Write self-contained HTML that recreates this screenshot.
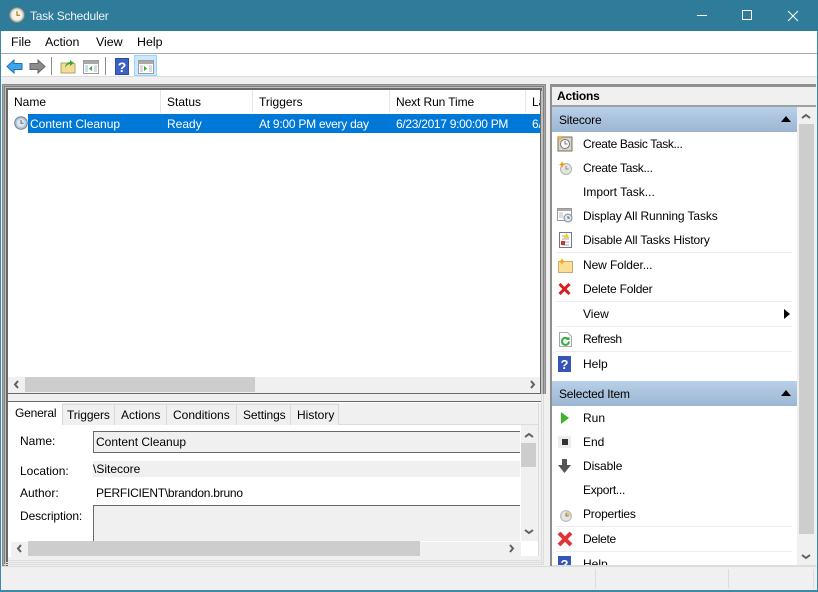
<!DOCTYPE html>
<html><head><meta charset="utf-8"><title>Task Scheduler</title>
<style>
html,body{margin:0;padding:0;background:#f0f0f0}
#w{position:relative;width:818px;height:592px;overflow:hidden;background:#f0f0f0;font-family:"Liberation Sans",sans-serif;font-size:12px;color:#000}
#w div,#w span.t,#w svg{position:absolute}
.t{white-space:nowrap;line-height:16px}
.w{color:#fff}
.sep{background:#ececec;height:1px;left:556px;width:236px}
.h{background:#e5e5e5;width:1px}
.tab{background:#f0f0f0;border:1px solid #d9d9d9;border-bottom:none;box-sizing:border-box;height:21px;top:404px}
.g{background:#cdcdcd}
.ln{background:#696969}
.grp{background:linear-gradient(#b8d0e8,#9cb5d2);left:552px;width:245px;height:25px}
</style></head><body>
<div id="w">
<!-- title -->
<div style="left:0;top:0;width:818px;height:31px;background:#2e7b9a"></div>
<svg style="left:9px;top:7px" width="16" height="16" viewBox="0 0 16 16"><circle cx="8" cy="8" r="7.2" fill="#d9d6c6" stroke="#8d8d86"/><circle cx="8" cy="8" r="5.2" fill="#f6f4e8"/><path d="M8 4v4.300h3" fill="none" stroke="#a67c2a" stroke-width="1.2"/></svg>
<span class="t w" style="left:30px;top:8px;letter-spacing:-.25px;color:#eaf3f6">Task Scheduler</span>
<div style="left:697px;top:15px;width:10px;height:1px;background:#fff"></div>
<div style="left:742px;top:10px;width:8px;height:8px;border:1px solid #fff"></div>
<svg style="left:787px;top:10px" width="12" height="12" viewBox="0 0 12 12"><path d="M1 1l10 10M11 1L1 11" stroke="#fff" fill="none"/></svg>
<!-- outer border -->
<div style="left:0;top:31px;width:1px;height:561px;background:#3d89a8"></div>
<div style="left:817px;top:31px;width:1px;height:561px;background:#3d89a8"></div>
<div style="left:0;top:590px;width:818px;height:2px;background:#3d89a8"></div>
<!-- menu -->
<div style="left:1px;top:31px;width:816px;height:22px;background:#fff"></div>
<div style="left:1px;top:53px;width:816px;height:1px;background:#a9a9b2"></div>
<span class="t" style="left:11px;top:34px;font-size:12.4px">File</span>
<span class="t" style="left:45px;top:34px;font-size:12.4px">Action</span>
<span class="t" style="left:96px;top:34px;font-size:12.4px">View</span>
<span class="t" style="left:137px;top:34px;font-size:12.4px">Help</span>
<!-- toolbar -->
<div style="left:1px;top:54px;width:816px;height:22px;background:#fff"></div>
<div style="left:1px;top:76px;width:816px;height:1px;background:#dcdcdc"></div>
<svg style="left:6px;top:59px" width="17" height="15" viewBox="0 0 17 15"><path d="M1 7.500L8 1v3.500h8v6H8V14z" fill="#3fa6ec" stroke="#1f6fb5"/></svg>
<svg style="left:29px;top:59px" width="17" height="15" viewBox="0 0 17 15"><path d="M16 7.500L9 1v3.500H1v6h8V14z" fill="#8c8c8c" stroke="#666"/></svg>
<div style="left:51px;top:57px;width:1px;height:18px;background:#8c8c8c"></div>
<svg style="left:60px;top:58px" width="16" height="16" viewBox="0 0 16 16"><path d="M1 5h13l1 1v9H1z" fill="#f3dc94" stroke="#b9a168"/><path d="M5 10C5 6 8 4 10 4V2l4 3-4 3V6C8 6 6 8 5 10z" fill="#3fa535"/></svg>
<svg style="left:83px;top:60px" width="16" height="14" viewBox="0 0 16 14"><rect x=".5" y=".5" width="15" height="13" fill="#fff" stroke="#9c9c9c"/><rect x="1" y="1" width="14" height="3" fill="#a9a9a9"/><rect x="2" y="5" width="3" height="7" fill="#d5dbe2"/><rect x="11" y="5" width="3" height="7" fill="#d5dbe2"/><path d="M9 6v5L6 8.500z" fill="#2faa35"/></svg>
<div style="left:105px;top:57px;width:1px;height:18px;background:#8c8c8c"></div>
<svg style="left:115px;top:58px" width="14" height="17" viewBox="0 0 14 17"><rect width="14" height="17" fill="#2f4ba8"/><rect x="1" y="1" width="12" height="15" fill="#3e5fc4"/><text x="7" y="14" font-family="Liberation Sans" font-weight="bold" font-size="14" fill="#fff" text-anchor="middle">?</text></svg>
<div style="left:134px;top:55px;width:23px;height:21px;box-sizing:border-box;background:#cce8ff;border:1px solid #99d1ff"></div>
<svg style="left:138px;top:60px" width="16" height="14" viewBox="0 0 16 14"><rect x=".5" y=".5" width="15" height="13" fill="#fff" stroke="#9c9c9c"/><rect x="1" y="1" width="14" height="3" fill="#a9a9a9"/><rect x="2" y="5" width="3" height="7" fill="#d5dbe2"/><rect x="11" y="5" width="3" height="7" fill="#d5dbe2"/><path d="M6 6v5l3-2.500z" fill="#2faa35"/></svg>

<!-- left top pane frame -->
<div style="left:2px;top:84px;width:544px;height:482px;background:#8a8a8a"></div>
<div style="left:3px;top:85px;width:542px;height:480px;background:#a8a8a8"></div>
<div style="left:4px;top:86px;width:540px;height:480px;background:#7f7f7f"></div>
<div style="left:5px;top:87px;width:538px;height:479px;background:#c0c0c0"></div>
<div style="left:6px;top:88px;width:536px;height:3px;background:#696969"></div>
<div style="left:6px;top:88px;width:2px;height:478px;background:#696969"></div>
<div style="left:540px;top:88px;width:1px;height:306px;background:#696969"></div>
<div style="left:8px;top:90px;width:532px;height:303px;background:#fff"></div>
<!-- list header -->
<div class="h" style="left:160px;top:90px;height:23px"></div>
<div class="h" style="left:252px;top:90px;height:23px"></div>
<div class="h" style="left:389px;top:90px;height:23px"></div>
<div class="h" style="left:525px;top:90px;height:23px"></div>
<span class="t" style="left:14px;top:94px">Name</span>
<span class="t" style="left:167px;top:94px">Status</span>
<span class="t" style="left:259px;top:94px">Triggers</span>
<span class="t" style="left:396px;top:94px;letter-spacing:-.1px">Next Run Time</span>
<span class="t" style="left:532px;top:94px;width:8px;overflow:hidden">La</span>
<!-- row -->
<svg style="left:14px;top:116px" width="14" height="14" viewBox="0 0 14 14"><circle cx="7" cy="7" r="6.300" fill="#b4c6d8" stroke="#6c8098"/><circle cx="7" cy="7" r="4" fill="#dfe7ee"/><path d="M7 4v3.300h2.500" fill="none" stroke="#5a6a7c"/></svg>
<div style="left:28px;top:114px;width:512px;height:19px;background:#0078d7"></div>
<span class="t w" style="left:30px;top:116px">Content Cleanup</span>
<span class="t w" style="left:167px;top:116px">Ready</span>
<span class="t w" style="left:259px;top:116px;letter-spacing:-.25px">At 9:00 PM every day</span>
<span class="t w" style="left:396px;top:116px;letter-spacing:-.3px">6/23/2017 9:00:00 PM</span>
<span class="t w" style="left:532px;top:116px;width:8px;overflow:hidden">6/</span>
<!-- list hscroll -->
<div style="left:8px;top:377px;width:532px;height:16px;background:#f0f0f0"></div>
<div class="g" style="left:25px;top:377px;width:230px;height:15px"></div>
<svg style="left:13px;top:380px" width="7" height="9" viewBox="0 0 7 9"><path d="M5 1L2 4.500 5 8" fill="none" stroke="#606060" stroke-width="2"/></svg>
<svg style="left:529px;top:380px" width="7" height="9" viewBox="0 0 7 9"><path d="M2 1l3 3.500L2 8" fill="none" stroke="#606060" stroke-width="2"/></svg>
<div class="ln" style="left:6px;top:393px;width:535px;height:1px"></div>
<!-- lower pane -->
<div style="left:8px;top:394px;width:541px;height:172px;background:#f0f0f0"></div>
<div class="ln" style="left:6px;top:401px;width:536px;height:1px"></div>
<div style="left:8px;top:402px;width:533px;height:1px;background:#fff"></div>
<div style="left:538px;top:403px;width:1px;height:157px;background:#dcdcdc"></div>
<div style="left:8px;top:424px;width:531px;height:1px;background:#dcdcdc"></div>
<div class="tab" style="left:62px;width:53px"></div>
<div class="tab" style="left:114px;width:53px"></div>
<div class="tab" style="left:166px;width:71px"></div>
<div class="tab" style="left:236px;width:55px"></div>
<div class="tab" style="left:290px;width:49px"></div>
<div style="left:8px;top:403px;width:54px;height:22px;background:#fff"></div>
<span class="t" style="left:15px;top:405px;letter-spacing:-.2px">General</span>
<span class="t" style="left:67px;top:407px;letter-spacing:-.1px">Triggers</span>
<span class="t" style="left:121px;top:407px">Actions</span>
<span class="t" style="left:173px;top:407px">Conditions</span>
<span class="t" style="left:243px;top:407px;letter-spacing:-.1px">Settings</span>
<span class="t" style="left:297px;top:407px">History</span>
<div style="left:8px;top:425px;width:530px;height:135px;background:#fff"></div>
<div style="left:521px;top:425px;width:17px;height:116px;background:#f0f0f0"></div>
<div class="g" style="left:521px;top:443px;width:15px;height:24px"></div>
<svg style="left:524px;top:432px" width="10" height="7" viewBox="0 0 10 7"><path d="M1 5l4-3 4 3" fill="none" stroke="#606060" stroke-width="2"/></svg>
<svg style="left:524px;top:528px" width="10" height="7" viewBox="0 0 10 7"><path d="M1 2l4 3 4-3" fill="none" stroke="#606060" stroke-width="2"/></svg>
<span class="t" style="left:20px;top:433px">Name:</span>
<div style="left:93px;top:431px;width:427px;height:22px;background:#f0f0f0;border-top:1px solid #696969;border-bottom:1px solid #696969;border-left:1px solid #696969;box-sizing:border-box"></div>
<span class="t" style="left:96px;top:434px">Content Cleanup</span>
<span class="t" style="left:20px;top:463px">Location:</span>
<div style="left:93px;top:461px;width:427px;height:16px;background:#f0f0f0"></div>
<span class="t" style="left:93px;top:461px">\Sitecore</span>
<span class="t" style="left:20px;top:485px">Author:</span>
<span class="t" style="left:96px;top:485px;letter-spacing:-.25px">PERFICIENT\brandon.bruno</span>
<span class="t" style="left:20px;top:508px;letter-spacing:-.1px">Description:</span>
<div style="left:93px;top:505px;width:427px;height:36px;background:#f0f0f0;border-top:1px solid #696969;border-left:1px solid #696969;box-sizing:border-box"></div>
<!-- lower hscroll -->
<div style="left:11px;top:541px;width:510px;height:15px;background:#f0f0f0"></div>
<div style="left:8px;top:541px;width:513px;height:1px;background:#fff"></div>
<div style="left:8px;top:556px;width:531px;height:5px;background:#f0f0f0"></div>
<div style="left:8px;top:541px;width:3px;height:16px;background:#fff"></div>
<div class="g" style="left:28px;top:541px;width:392px;height:15px"></div>
<svg style="left:16px;top:544px" width="7" height="9" viewBox="0 0 7 9"><path d="M5 1L2 4.500 5 8" fill="none" stroke="#606060" stroke-width="2"/></svg>
<svg style="left:508px;top:544px" width="7" height="9" viewBox="0 0 7 9"><path d="M2 1l3 3.500L2 8" fill="none" stroke="#606060" stroke-width="2"/></svg>
<div style="left:8px;top:560px;width:532px;height:1px;background:#dcdcdc"></div>
<div style="left:6px;top:562px;width:538px;height:1px;background:#dcdcdc"></div>
<div style="left:4px;top:564px;width:540px;height:1px;background:#dcdcdc"></div>
<div style="left:541px;top:394px;width:1px;height:170px;background:#dcdcdc"></div>
<div style="left:543px;top:394px;width:1px;height:170px;background:#dcdcdc"></div>

<!-- right pane -->
<div style="left:550px;top:84px;width:267px;height:482px;background:#f0f0f0"></div>
<div style="left:550px;top:84px;width:266px;height:3px;background:#8f8f8f"></div>
<div style="left:550px;top:84px;width:2px;height:482px;background:#8f8f8f"></div>
<div style="left:552px;top:87px;width:264px;height:18px;background:#f0f0f0"></div>
<span class="t" style="left:557px;top:88px;font-weight:bold;letter-spacing:-.2px">Actions</span>
<div style="left:552px;top:105px;width:264px;height:2px;background:#a0a0a0"></div>
<div style="left:552px;top:107px;width:245px;height:458px;background:#fff"></div>
<div style="left:797px;top:107px;width:17px;height:458px;background:#f0f0f0"></div>
<div class="g" style="left:799px;top:124px;width:15px;height:410px"></div>
<svg style="left:801px;top:113px" width="10" height="7" viewBox="0 0 10 7"><path d="M1 5l4-3 4 3" fill="none" stroke="#606060" stroke-width="2"/></svg>
<svg style="left:801px;top:553px" width="10" height="7" viewBox="0 0 10 7"><path d="M1 2l4 3 4-3" fill="none" stroke="#606060" stroke-width="2"/></svg>

<div class="grp" style="top:107px"></div>
<span class="t" style="left:559px;top:112px;letter-spacing:-.2px">Sitecore</span>
<svg style="left:781px;top:116px" width="10" height="6"><path d="M5 0l5 6H0z" fill="#000"/></svg>

<svg style="left:557px;top:135px" width="16" height="17" viewBox="0 0 16 17"><rect x="1" y="2" width="14" height="14" fill="#d8d4c4" stroke="#7a6f60"/><circle cx="8" cy="9" r="4.500" fill="#fff" stroke="#777"/><path d="M8 6v3h2.500" fill="none" stroke="#777"/><path d="M3 0l1 2 2 1-2 1-1 2-1-2-2-1 2-1z" fill="#f5b428"/></svg>
<span class="t" style="left:583px;top:136px;letter-spacing:-.35px">Create Basic Task...</span>
<svg style="left:559px;top:161px" width="13" height="14" viewBox="0 0 13 14"><circle cx="7" cy="8" r="5.500" fill="#e8e4d8" stroke="#a8b8c4"/><path d="M7 5v3h2.500" fill="none" stroke="#80909c"/><path d="M3 0l1 2.500 2.500 1-2.500 1L3 7 2 4.500l-2-1 2-1z" fill="#f19a14"/></svg>
<span class="t" style="left:583px;top:160px;letter-spacing:-.3px">Create Task...</span>
<span class="t" style="left:583px;top:184px">Import Task...</span>
<svg style="left:557px;top:208px" width="16" height="15" viewBox="0 0 16 15"><rect x=".5" y=".5" width="14" height="12" fill="#fff" stroke="#999"/><rect x="1" y="1" width="13" height="2" fill="#aaa"/><path d="M2 5h4M2 7h4M2 9h4" stroke="#bbb"/><circle cx="11" cy="10" r="4" fill="#dfe6ec" stroke="#7f8f9f"/><path d="M11 8v2h2" fill="none" stroke="#667"/></svg>
<span class="t" style="left:583px;top:208px;letter-spacing:-.1px">Display All Running Tasks</span>
<svg style="left:558px;top:232px" width="14" height="16" viewBox="0 0 14 16"><rect x="1.500" y=".5" width="12" height="15" fill="#fff" stroke="#6b7a90"/><path d="M4 4h3M4 7h7M4 10h7M4 13h7" stroke="#aab"/><path d="M8.500 1l3 5h-6z" fill="#f5d020"/><rect x="3" y="9" width="4" height="4" fill="#c33"/></svg>
<span class="t" style="left:583px;top:232px;letter-spacing:-.15px">Disable All Tasks History</span>
<div class="sep" style="top:252px"></div>
<svg style="left:558px;top:258px" width="15" height="15" viewBox="0 0 15 15"><path d="M.5 3.500h14v11H.5z" fill="#f8df95" stroke="#c7ad6c"/><path d="M4 0l1 2.500 2.500 1-2.500 1L4 7 3 4.500l-2.500-1 2.500-1z" fill="#f5a413"/></svg>
<span class="t" style="left:583px;top:257px;letter-spacing:-.1px">New Folder...</span>
<svg style="left:558px;top:283px" width="13" height="12" viewBox="0 0 13 12"><path d="M1.500 1l10 10M11.500 1l-10 10" stroke="#d81e20" stroke-width="3"/></svg>
<span class="t" style="left:583px;top:281px;letter-spacing:-.2px">Delete Folder</span>
<div class="sep" style="top:301px"></div>
<span class="t" style="left:583px;top:306px">View</span>
<svg style="left:784px;top:309px" width="6" height="10"><path d="M0 0l6 5-6 5z" fill="#000"/></svg>
<div class="sep" style="top:326px"></div>
<svg style="left:559px;top:332px" width="13" height="15" viewBox="0 0 13 15"><path d="M.5.500h8l4 4v10H.5z" fill="#fff" stroke="#aaa"/><path d="M10 9.500a3.500 3.500 0 1 1-1-2.600" fill="none" stroke="#2fae3a" stroke-width="2"/><path d="M10.500 4.500v3.500H7z" fill="#2fae3a"/></svg>
<span class="t" style="left:583px;top:331px;letter-spacing:-.5px">Refresh</span>
<div class="sep" style="top:351px"></div>
<svg style="left:558px;top:356px" width="13" height="16" viewBox="0 0 13 16"><rect width="13" height="16" fill="#3655b8"/><text x="6.500" y="13" font-family="Liberation Sans" font-weight="bold" font-size="13" fill="#fff" text-anchor="middle">?</text></svg>
<span class="t" style="left:583px;top:356px">Help</span>

<div class="grp" style="top:381px"></div>
<span class="t" style="left:559px;top:386px;letter-spacing:-.2px">Selected Item</span>
<svg style="left:781px;top:390px" width="10" height="6"><path d="M5 0l5 6H0z" fill="#000"/></svg>

<svg style="left:561px;top:412px" width="8" height="12"><path d="M0 0l8 6-8 6z" fill="#3cb52d"/></svg>
<span class="t" style="left:583px;top:410px">Run</span>
<div style="left:558px;top:436px;width:13px;height:12px;background:#ededed"></div>
<div style="left:562px;top:439px;width:6px;height:6px;background:#333"></div>
<span class="t" style="left:583px;top:434px">End</span>
<svg style="left:558px;top:459px" width="13" height="14" viewBox="0 0 13 14"><path d="M4 0h5v6h4l-6.500 8L0 6h4z" fill="#555"/></svg>
<span class="t" style="left:583px;top:458px;letter-spacing:-.1px">Disable</span>
<span class="t" style="left:583px;top:482px;letter-spacing:-.3px">Export...</span>
<svg style="left:560px;top:510px" width="12" height="12" viewBox="0 0 12 12"><circle cx="6" cy="6" r="5.400" fill="#e8e6dc" stroke="#aab6c0"/><path d="M6 1.500V6h4.500A4.500 4.500 0 0 0 6 1.500z" fill="#e8c878"/><path d="M6 3v3h2.500" fill="none" stroke="#778"/></svg>
<span class="t" style="left:583px;top:506px;letter-spacing:-.2px">Properties</span>
<div class="sep" style="top:526px"></div>
<svg style="left:557px;top:531px" width="16" height="16" viewBox="0 0 16 16"><path d="M2 2l12 12M14 2L2 14" stroke="#e0343a" stroke-width="4"/></svg>
<span class="t" style="left:583px;top:531px;letter-spacing:-.3px">Delete</span>
<div class="sep" style="top:551px"></div>
<div style="left:552px;top:556px;width:245px;height:9px;overflow:hidden">
<span class="t" style="left:31px;top:0">Help</span>
<svg style="left:6px;top:0" width="13" height="16" viewBox="0 0 13 16"><rect width="13" height="16" fill="#3655b8"/><text x="6.500" y="13" font-family="Liberation Sans" font-weight="bold" font-size="13" fill="#fff" text-anchor="middle">?</text></svg>
</div>
<div style="left:552px;top:565px;width:264px;height:1px;background:#dcdcdc"></div>

<!-- status bar -->
<div style="left:1px;top:566px;width:816px;height:1px;background:#dcdcdc"></div>
<div style="left:1px;top:567px;width:816px;height:23px;background:#f0f0f0"></div>
<div style="left:595px;top:569px;width:1px;height:19px;background:#dcdcdc"></div>
<div style="left:728px;top:569px;width:1px;height:19px;background:#dcdcdc"></div>
<div style="left:813px;top:569px;width:1px;height:19px;background:#dcdcdc"></div>
</div>
</body></html>
